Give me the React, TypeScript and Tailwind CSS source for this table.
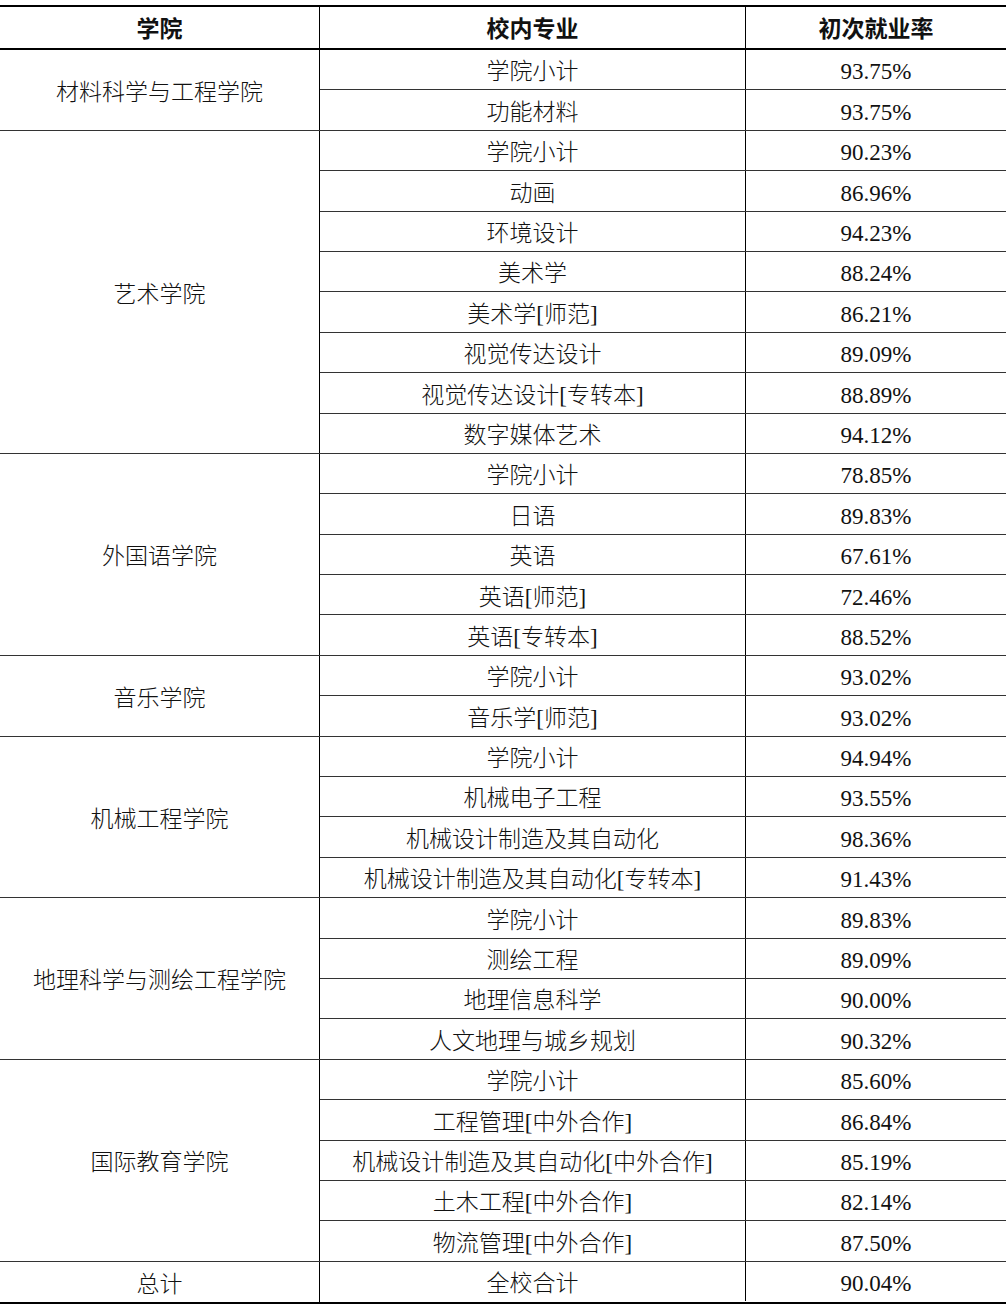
import React from "react";

type Group = { name: string; rows: [string, string][] };

const groups: Group[] = [
  { name: "材料科学与工程学院", rows: [["学院小计", "93.75%"], ["功能材料", "93.75%"]] },
  {
    name: "艺术学院",
    rows: [
      ["学院小计", "90.23%"],
      ["动画", "86.96%"],
      ["环境设计", "94.23%"],
      ["美术学", "88.24%"],
      ["美术学[师范]", "86.21%"],
      ["视觉传达设计", "89.09%"],
      ["视觉传达设计[专转本]", "88.89%"],
      ["数字媒体艺术", "94.12%"],
    ],
  },
  {
    name: "外国语学院",
    rows: [
      ["学院小计", "78.85%"],
      ["日语", "89.83%"],
      ["英语", "67.61%"],
      ["英语[师范]", "72.46%"],
      ["英语[专转本]", "88.52%"],
    ],
  },
  { name: "音乐学院", rows: [["学院小计", "93.02%"], ["音乐学[师范]", "93.02%"]] },
  {
    name: "机械工程学院",
    rows: [
      ["学院小计", "94.94%"],
      ["机械电子工程", "93.55%"],
      ["机械设计制造及其自动化", "98.36%"],
      ["机械设计制造及其自动化[专转本]", "91.43%"],
    ],
  },
  {
    name: "地理科学与测绘工程学院",
    rows: [
      ["学院小计", "89.83%"],
      ["测绘工程", "89.09%"],
      ["地理信息科学", "90.00%"],
      ["人文地理与城乡规划", "90.32%"],
    ],
  },
  {
    name: "国际教育学院",
    rows: [
      ["学院小计", "85.60%"],
      ["工程管理[中外合作]", "86.84%"],
      ["机械设计制造及其自动化[中外合作]", "85.19%"],
      ["土木工程[中外合作]", "82.14%"],
      ["物流管理[中外合作]", "87.50%"],
    ],
  },
  { name: "总计", rows: [["全校合计", "90.04%"]] },
];

export default function App() {
  return (
    <div className="w-[1008px] h-[1304px] bg-white pt-[5px]">
      <div
        className="w-[1006px] border-t-2 border-b-2 border-black text-[23px] font-light text-[#111]"
        style={{ fontFamily: '"Liberation Serif", "Noto Sans CJK SC", serif' }}
      >
        <div
          className="flex h-[43px] border-b-2 border-black font-bold"
          style={{ fontFamily: '"Liberation Sans", "Noto Sans CJK SC", sans-serif' }}
        >
          <div className="w-[320px] border-r border-black flex items-center justify-center pt-[4px]">学院</div>
          <div className="w-[426px] border-r border-black flex items-center justify-center pt-[4px]">校内专业</div>
          <div className="flex-1 flex items-center justify-center pt-[4px]">初次就业率</div>
        </div>
        {groups.map((g, gi) => (
          <div key={gi} className={`flex ${gi > 0 ? "border-t border-[#333]" : ""}`}>
            <div className="w-[320px] border-r border-black flex items-center justify-center pt-[6px]">
              {g.name}
            </div>
            <div className="flex-1 flex flex-col">
              {g.rows.map((r, ri) => (
                <div
                  key={ri}
                  className={`flex ${ri > 0 ? "h-[40.4px] border-t border-[#333]" : "h-[39.4px]"}`}
                >
                  <div className="w-[426px] border-r border-black flex items-center justify-center pt-[6px]">
                    {r[0]}
                  </div>
                  <div className="flex-1 flex items-center justify-center pt-[6px]">{r[1]}</div>
                </div>
              ))}
            </div>
          </div>
        ))}
      </div>
    </div>
  );
}
